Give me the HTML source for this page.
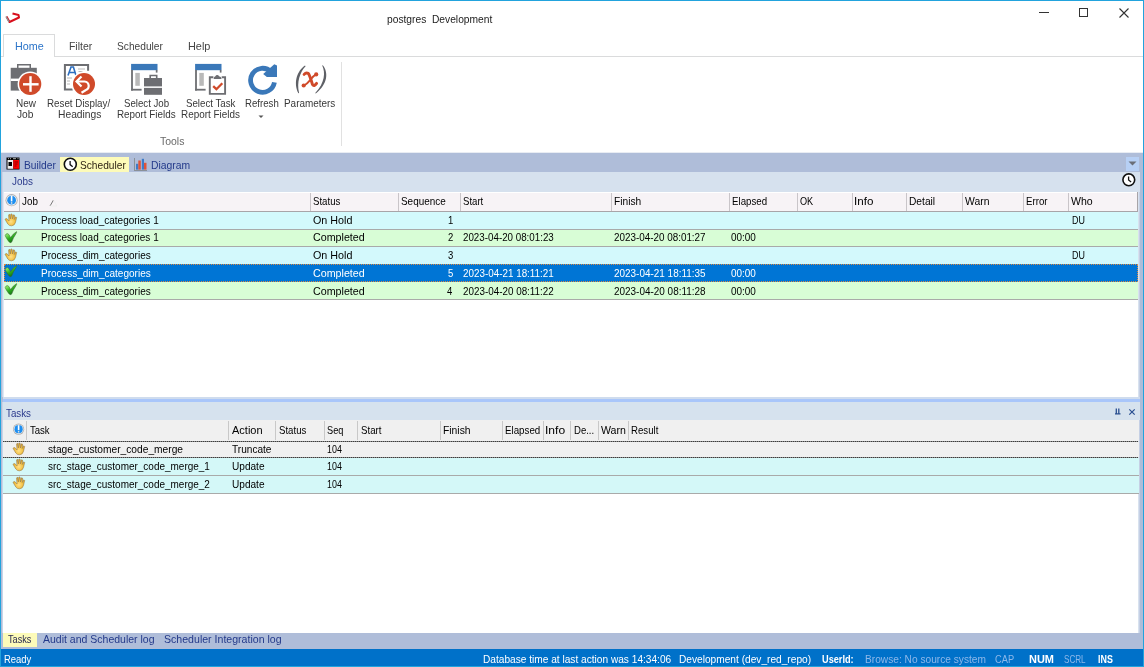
<!DOCTYPE html>
<html><head><meta charset="utf-8">
<style>
*{box-sizing:border-box;margin:0;padding:0}
html,body{width:1144px;height:667px;overflow:hidden;background:#fff}
body{position:relative;font-family:"Liberation Sans",sans-serif;font-size:10px;color:#1e1e1e}
.a{position:absolute}
.t{position:absolute;white-space:pre;transform-origin:0 0}
svg{position:absolute;overflow:visible}
#w{position:absolute;left:0;top:0;width:1144px;height:667px;overflow:hidden;filter:blur(0.3px)}
</style></head><body><div id="w">
<svg style="left:0px;top:0px" width="24" height="30" viewBox="0 0 24 30"><path d="M6.5 16.5 L9.5 22 L19 17.5 L18.5 15 L12.5 13.5" fill="none" stroke="#d80f1c" stroke-width="2" stroke-linejoin="round"/><path d="M6 16.5 L9 22" stroke="#8a9a9a" stroke-width="1.3"/></svg>
<div class="t" style="left:387.00px;top:14.17px;font-size:11.5px;line-height:11.5px;color:#222;transform:scaleX(0.8903);">postgres  Development</div>
<div class="a" style="left:1039px;top:11.6px;width:10px;height:1px;background:#333;"></div>
<div class="a" style="left:1079px;top:8px;width:9px;height:9px;background:transparent;border:1px solid #333"></div>
<svg style="left:1119px;top:8px" width="10" height="10" viewBox="0 0 10 10"><path d="M0.5 0.5 L9.5 9.5 M9.5 0.5 L0.5 9.5" stroke="#333" stroke-width="1.1"/></svg>
<div class="a" style="left:1px;top:56px;width:1142px;height:1px;background:#dadbdc;"></div>
<div class="a" style="left:3px;top:34px;width:52px;height:23px;background:#fff;border:1px solid #dadbdc;border-bottom:none"></div>
<div class="t" style="left:14.70px;top:40.48px;font-size:11.6px;line-height:11.6px;color:#2b74c9;transform:scaleX(0.9285);">Home</div>
<div class="t" style="left:68.60px;top:40.48px;font-size:11.6px;line-height:11.6px;color:#444;transform:scaleX(0.8995);">Filter</div>
<div class="t" style="left:117.00px;top:40.48px;font-size:11.6px;line-height:11.6px;color:#444;transform:scaleX(0.8788);">Scheduler</div>
<div class="t" style="left:188.20px;top:40.48px;font-size:11.6px;line-height:11.6px;color:#444;transform:scaleX(0.9403);">Help</div>
<svg style="left:0px;top:56px" width="50" height="50" viewBox="0 0 50 50">
<path d="M17 8 h14 v4 h-1.5 v-2.4 h-11 v2.4 h-1.5z" fill="#6d6e72"/>
<rect x="10.7" y="11.8" width="26.1" height="22.8" fill="#6d6e72"/>
<rect x="10.7" y="22.6" width="12" height="2.4" fill="#fff"/>
<circle cx="30.2" cy="28" r="12.6" fill="#fff"/>
<circle cx="30.2" cy="28" r="11.1" fill="#d04a2a"/>
<rect x="23" y="27.1" width="15.6" height="2.4" fill="#fff"/>
<rect x="29.3" y="20.2" width="2.4" height="15.6" fill="#fff"/></svg>
<svg style="left:50px;top:56px" width="50" height="50" viewBox="0 0 50 50">
<path d="M13.9 8 h25.2 v6.8 h-2 v-4.8 h-21.2 v22.6 h6.8 v2 h-8.8z" fill="#6d6e72"/>
<path d="M18 19.6 L21 11 L23.4 11 L26 19.6 M19.3 16.5 h5.5" fill="none" stroke="#2e6fc0" stroke-width="1.6"/>
<path d="M28 13 h7 M28.5 15.5 h4 M17 22 h5 M17 25 h3 M17 28 h3" stroke="#b8b8b8" stroke-width="1"/>
<circle cx="34" cy="28" r="12.5" fill="#fff"/>
<circle cx="34" cy="28" r="11" fill="#d04a2a"/>
<path d="M27 25.5 h7.5 a4.5 4.5 0 0 1 1 8.8 l-4 2.4" fill="none" stroke="#fff" stroke-width="2.2"/>
<path d="M31.5 20.5 L26.5 25.5 L31.5 30.5" fill="none" stroke="#fff" stroke-width="2.2"/></svg>
<svg style="left:130px;top:56px" width="40" height="40" viewBox="0 0 40 40"><rect x="1.1" y="7.9" width="26.4" height="6.3" fill="#3a78b9"/>
<rect x="1.1" y="14" width="1.8" height="20.6" fill="#6d6e72"/>
<rect x="1.1" y="32.8" width="10.5" height="1.8" fill="#6d6e72"/>
<rect x="25.8" y="14" width="1.7" height="2.6" fill="#6d6e72"/>
<rect x="5.3" y="16.9" width="4.5" height="12.9" fill="#b9b9b9"/>
<path d="M19.4 22.3 v-3.6 h8.1 v3.6 h-1.6 v-2.1 h-4.9 v2.1z" fill="#6d6e72"/>
<rect x="14" y="22" width="18" height="8.4" fill="#6d6e72"/>
<rect x="14" y="31.9" width="18" height="6.9" fill="#6d6e72"/></svg>
<svg style="left:194px;top:56px" width="40" height="40" viewBox="0 0 40 40"><rect x="1.1" y="7.9" width="26.4" height="6.3" fill="#3a78b9"/>
<rect x="1.1" y="14" width="1.8" height="20.6" fill="#6d6e72"/>
<rect x="1.1" y="32.8" width="10.5" height="1.8" fill="#6d6e72"/>
<rect x="25.8" y="14" width="1.7" height="2.6" fill="#6d6e72"/>
<rect x="5.3" y="16.9" width="4.5" height="12.9" fill="#b9b9b9"/>
<path d="M19.4 21.2 h-3.6 v16.7 h15.3 v-16.7 h-3.4" fill="none" stroke="#6d6e72" stroke-width="1.9"/>
<path d="M19.6 22.9 h8 l-0.8 -2 l-1.8 -0.6 a1.9 1.9 0 0 0 -3.6 0 l-1.2 0.6z" fill="#6d6e72"/>
<path d="M19.2 30.2 L22.4 33.2 L28.3 27.2" fill="none" stroke="#d04a2a" stroke-width="2.3"/></svg>
<svg style="left:240px;top:56px" width="45" height="45" viewBox="0 0 45 45">
<path d="M34.42 26.38 A12 12 0 1 1 31.1 15.8" fill="none" stroke="#3a78b9" stroke-width="4.8"/>
<path d="M34.3 8.2 L37 9.5 L37 21.1 L26.8 21.1 L23.2 18.1z" fill="#3a78b9"/></svg>
<svg style="left:285px;top:56px" width="45" height="45" viewBox="0 0 45 45">
<path d="M20 9.5 C12.5 14.5 8 26 13.4 37.3 L14.1 37 C11.5 26 15 16 20.6 10.2z" fill="#5e6066"/>
<path d="M37.8 9.2 C43.5 16 43 28 30.8 37.4 L30.2 37 C40 27 40.5 16 37.2 9.5z" fill="#5e6066"/>
<path d="M19.1 18.4 Q21 16.3 23.2 17.4 Q24.6 18.8 27.5 28.6 Q29 31 31.6 27.4" fill="none" stroke="#d04a2a" stroke-width="2.9" stroke-linecap="round"/>
<path d="M31.4 18.1 Q28 20 25.4 23.8 Q22 28 18.5 29.8" fill="none" stroke="#d04a2a" stroke-width="1.9" stroke-linecap="round"/>
<circle cx="31.2" cy="18.4" r="2.1" fill="#d04a2a"/><circle cx="18.7" cy="29.5" r="2.1" fill="#d04a2a"/></svg>
<div class="t" style="left:15.50px;top:97.28px;font-size:11.6px;line-height:11.6px;color:#383838;transform:scaleX(0.8606);">New</div>
<div class="t" style="left:17.30px;top:108.28px;font-size:11.6px;line-height:11.6px;color:#383838;transform:scaleX(0.8770);">Job</div>
<div class="t" style="left:47.00px;top:97.28px;font-size:11.6px;line-height:11.6px;color:#383838;transform:scaleX(0.8448);">Reset Display/</div>
<div class="t" style="left:57.70px;top:108.28px;font-size:11.6px;line-height:11.6px;color:#383838;transform:scaleX(0.8864);">Headings</div>
<div class="t" style="left:123.60px;top:97.28px;font-size:11.6px;line-height:11.6px;color:#383838;transform:scaleX(0.8326);">Select Job</div>
<div class="t" style="left:116.80px;top:108.28px;font-size:11.6px;line-height:11.6px;color:#383838;transform:scaleX(0.8503);">Report Fields</div>
<div class="t" style="left:185.80px;top:97.28px;font-size:11.6px;line-height:11.6px;color:#383838;transform:scaleX(0.8372);">Select Task</div>
<div class="t" style="left:181.00px;top:108.28px;font-size:11.6px;line-height:11.6px;color:#383838;transform:scaleX(0.8532);">Report Fields</div>
<div class="t" style="left:245.00px;top:97.28px;font-size:11.6px;line-height:11.6px;color:#383838;transform:scaleX(0.8319);">Refresh</div>
<div class="t" style="left:283.70px;top:97.28px;font-size:11.6px;line-height:11.6px;color:#383838;transform:scaleX(0.8565);">Parameters</div>
<svg style="left:258px;top:115px" width="6" height="4" viewBox="0 0 6 4"><path d="M0.5 0.5 L3 3 L5.5 0.5z" fill="#555"/></svg>
<div class="a" style="left:341px;top:62px;width:1px;height:84px;background:#e1e1e1;"></div>
<div class="t" style="left:160.20px;top:135.48px;font-size:11.6px;line-height:11.6px;color:#6a6a6a;transform:scaleX(0.9022);">Tools</div>
<div class="a" style="left:1px;top:153px;width:1142px;height:496px;background:#afbdd9;"></div>
<div class="a" style="left:1px;top:152px;width:1142px;height:1px;background:#e8ecf3;"></div>
<div class="a" style="left:1px;top:153px;width:1px;height:496px;background:#b4bcd6;"></div>
<svg style="left:6px;top:157px" width="14" height="13" viewBox="0 0 14 13"><rect x="0.5" y="0.5" width="13" height="12" fill="#000"/><rect x="1.5" y="3" width="5.8" height="8.8" fill="#eee"/><rect x="7.3" y="3" width="5.7" height="8.8" fill="#f00"/><rect x="2.5" y="5" width="3.5" height="4" fill="#000"/><path d="M8.5 5 h3.5 M8.5 7 h3 M8.5 9 h2" stroke="#800" stroke-width="1"/><path d="M2 1.7 h1 M4 1.7 h1 M7 1.7 h3 M11.5 1.7 h1" stroke="#ddd" stroke-width="0.8"/></svg>
<div class="t" style="left:23.60px;top:158.58px;font-size:11.6px;line-height:11.6px;color:#23398a;transform:scaleX(0.8805);">Builder</div>
<div class="a" style="left:60px;top:157px;width:69px;height:15px;background:#fdfbb9;"></div>
<svg style="left:62px;top:157px" width="16" height="16" viewBox="0 0 16 16"><circle cx="8.3" cy="7.3" r="6" fill="#fff" stroke="#111" stroke-width="1.6"/><path d="M8.1 4 v3.6 l2.6 2.1" fill="none" stroke="#111" stroke-width="1.3"/></svg>
<div class="t" style="left:80.10px;top:158.58px;font-size:11.6px;line-height:11.6px;color:#2a1f10;transform:scaleX(0.8769);">Scheduler</div>
<svg style="left:134px;top:158px" width="14" height="14" viewBox="0 0 14 14"><rect x="0" y="0" width="1" height="12.5" fill="#8a9098"/><rect x="0" y="12" width="13" height="1" fill="#8a9098"/><rect x="2" y="5.8" width="2.3" height="5.8" fill="#3d7cc9"/><rect x="4.3" y="2.5" width="2.5" height="9.1" fill="#e0543a"/><rect x="7.8" y="0.8" width="2.2" height="10.8" fill="#3d7cc9"/><rect x="10" y="4.8" width="2.5" height="6.8" fill="#e0543a"/></svg>
<div class="t" style="left:151.00px;top:158.58px;font-size:11.6px;line-height:11.6px;color:#23398a;transform:scaleX(0.8922);">Diagram</div>
<div class="a" style="left:1126px;top:157px;width:13px;height:14px;background:#b7d0f5;"></div>
<svg style="left:1128px;top:161px" width="9" height="5" viewBox="0 0 9 5"><path d="M0.5 0.5 h8 l-4 4z" fill="#6a6e78"/></svg>
<div class="a" style="left:2px;top:172px;width:1px;height:225px;background:#c8d4e8;"></div>
<div class="a" style="left:3px;top:172px;width:1135px;height:225px;background:#fff;"></div>
<div class="a" style="left:3px;top:192px;width:1px;height:205px;background:#e0e8f4;"></div>
<div class="a" style="left:1138px;top:192px;width:1px;height:205px;background:#d8e2ef;"></div>
<div class="a" style="left:1139px;top:192px;width:1px;height:205px;background:#c5d0e5;"></div>
<div class="a" style="left:3px;top:172px;width:1137px;height:20px;background:#d6e1ee;"></div>
<div class="t" style="left:11.90px;top:175.53px;font-size:10.6px;line-height:10.6px;color:#2a3a8c;transform:scaleX(0.9330);">Jobs</div>
<svg style="left:1121px;top:173px" width="16" height="16" viewBox="0 0 16 16"><circle cx="7.8" cy="6.8" r="5.9" fill="#fff" stroke="#111" stroke-width="1.6"/><path d="M7.6 3.4 v3.6 l2.5 2.1" fill="none" stroke="#111" stroke-width="1.3"/></svg>
<div class="a" style="left:4px;top:192px;width:1134px;height:19px;background:#f7f3f6;"></div>
<div class="a" style="left:4px;top:192px;width:1134px;height:1px;background:#ffffff;"></div>
<div class="a" style="left:4px;top:211px;width:1134px;height:1px;background:#a8a4a8;"></div>
<div class="a" style="left:1137px;top:192px;width:1px;height:20px;background:#a8a4a8;"></div>
<svg style="left:4px;top:193px" width="16" height="16" viewBox="0 0 16 16"><circle cx="7.6" cy="7.2" r="6.1" fill="#b0b0b0"/><circle cx="7.6" cy="7.2" r="5.2" fill="#f4f4f4"/><circle cx="7.6" cy="7.2" r="4.4" fill="#1e8ef0"/><rect x="6.8" y="3" width="1.6" height="5.4" fill="#fff"/><rect x="6.9" y="9.2" width="1.4" height="1.6" fill="#e0e0e0"/></svg>
<div class="a" style="left:19px;top:193px;width:1px;height:18px;background:#c9c5c9;"></div>
<div class="a" style="left:310px;top:193px;width:1px;height:18px;background:#c9c5c9;"></div>
<div class="a" style="left:398px;top:193px;width:1px;height:18px;background:#c9c5c9;"></div>
<div class="a" style="left:460px;top:193px;width:1px;height:18px;background:#c9c5c9;"></div>
<div class="a" style="left:611px;top:193px;width:1px;height:18px;background:#c9c5c9;"></div>
<div class="a" style="left:729px;top:193px;width:1px;height:18px;background:#c9c5c9;"></div>
<div class="a" style="left:797px;top:193px;width:1px;height:18px;background:#c9c5c9;"></div>
<div class="a" style="left:852px;top:193px;width:1px;height:18px;background:#c9c5c9;"></div>
<div class="a" style="left:906px;top:193px;width:1px;height:18px;background:#c9c5c9;"></div>
<div class="a" style="left:962px;top:193px;width:1px;height:18px;background:#c9c5c9;"></div>
<div class="a" style="left:1023px;top:193px;width:1px;height:18px;background:#c9c5c9;"></div>
<div class="a" style="left:1068px;top:193px;width:1px;height:18px;background:#c9c5c9;"></div>
<div class="t" style="left:22.00px;top:195.38px;font-size:11.6px;line-height:11.6px;color:#000;transform:scaleX(0.8496);">Job</div>
<div class="t" style="left:312.60px;top:195.38px;font-size:11.6px;line-height:11.6px;color:#000;transform:scaleX(0.8315);">Status</div>
<div class="t" style="left:400.70px;top:195.38px;font-size:11.6px;line-height:11.6px;color:#000;transform:scaleX(0.8557);">Sequence</div>
<div class="t" style="left:463.00px;top:195.38px;font-size:11.6px;line-height:11.6px;color:#000;transform:scaleX(0.8273);">Start</div>
<div class="t" style="left:614.00px;top:195.38px;font-size:11.6px;line-height:11.6px;color:#000;transform:scaleX(0.8793);">Finish</div>
<div class="t" style="left:731.50px;top:195.38px;font-size:11.6px;line-height:11.6px;color:#000;transform:scaleX(0.8372);">Elapsed</div>
<div class="t" style="left:800.40px;top:195.38px;font-size:11.6px;line-height:11.6px;color:#000;transform:scaleX(0.7874);">OK</div>
<div class="t" style="left:853.60px;top:195.38px;font-size:11.6px;line-height:11.6px;color:#000;transform:scaleX(1.0006);">Info</div>
<div class="t" style="left:909.40px;top:195.38px;font-size:11.6px;line-height:11.6px;color:#000;transform:scaleX(0.8808);">Detail</div>
<div class="t" style="left:964.80px;top:195.38px;font-size:11.6px;line-height:11.6px;color:#000;transform:scaleX(0.8948);">Warn</div>
<div class="t" style="left:1025.50px;top:195.38px;font-size:11.6px;line-height:11.6px;color:#000;transform:scaleX(0.8339);">Error</div>
<div class="t" style="left:1071.00px;top:195.38px;font-size:11.6px;line-height:11.6px;color:#000;transform:scaleX(0.9106);">Who</div>
<svg style="left:49px;top:199px" width="9" height="8" viewBox="0 0 9 8"><path d="M1 7 L4.5 1" stroke="#777" stroke-width="1"/><path d="M4.5 1 L8 7 H1" fill="none" stroke="#eee" stroke-width="0.8"/></svg>
<svg style="left:0px;top:0px" width="1" height="1" viewBox="0 0 1 1"><defs><radialGradient id="hg" cx="0.5" cy="0.65" r="0.6"><stop offset="0" stop-color="#ffe08a"/><stop offset="0.6" stop-color="#f2c040"/><stop offset="1" stop-color="#d8a020"/></radialGradient></defs></svg>
<div class="a" style="left:4px;top:212px;width:1134px;height:17px;background:#d3f9fc;"></div>
<div class="a" style="left:4px;top:229px;width:1134px;height:1px;background:#a9aaa9;"></div>
<svg style="left:3px;top:212px" width="16" height="16" viewBox="0 0 16 16"><path d="M2.5 6.8 Q3.5 6 4.8 7.5 L6 9 L5.6 3 Q6 2 6.8 2.5 L7.4 7 L7.8 2.2 Q8.6 1.6 9.2 2.4 L9.4 7 L10.2 3 Q11 2.4 11.6 3.2 L11.2 7.5 L12.4 5 Q13.2 4.6 13.6 5.4 L12.6 10 Q11.8 13.6 8.6 13.8 Q6.2 14 4.8 12 L2.3 7.8 Q2 7 2.5 6.8z" fill="url(#hg)" stroke="#9a7a48" stroke-width="0.6"/></svg>
<div class="t" style="left:41.40px;top:214.08px;font-size:11.6px;line-height:11.6px;color:#000;transform:scaleX(0.8614);">Process load_categories 1</div>
<div class="t" style="left:312.60px;top:214.08px;font-size:11.6px;line-height:11.6px;color:#000;transform:scaleX(0.9267);">On Hold</div>
<div class="t" style="left:447.98px;top:214.08px;font-size:11.6px;line-height:11.6px;color:#000;transform:scaleX(0.8200);">1</div>
<div class="t" style="left:1071.80px;top:214.08px;font-size:11.6px;line-height:11.6px;color:#000;transform:scaleX(0.7696);">DU</div>
<div class="a" style="left:4px;top:230px;width:1134px;height:16px;background:#d8fdd6;"></div>
<div class="a" style="left:4px;top:246px;width:1134px;height:1px;background:#a9aaa9;"></div>
<svg style="left:3px;top:230px" width="16" height="16" viewBox="0 0 16 16"><defs><linearGradient id="cg" x1="0.1" y1="0.2" x2="0.6" y2="1"><stop offset="0" stop-color="#98f870"/><stop offset="0.5" stop-color="#30b020"/><stop offset="1" stop-color="#107010"/></linearGradient></defs><path d="M2.2 6.5 Q2.6 4.2 4.6 4.4 Q6 4.8 7 7.2 L7.6 8.4 Q10 4.5 13.6 2.4 Q13.9 3.2 13 4.5 Q10.5 8 8.8 12.6 Q8.2 13.8 7 13.4 Q5.8 12.8 4.8 11 Q3 8.5 2.2 6.5z" transform="translate(0,-0.8)" fill="url(#cg)" stroke="#3a5a3a" stroke-width="0.5"/></svg>
<div class="t" style="left:41.40px;top:231.48px;font-size:11.6px;line-height:11.6px;color:#000;transform:scaleX(0.8614);">Process load_categories 1</div>
<div class="t" style="left:312.60px;top:231.48px;font-size:11.6px;line-height:11.6px;color:#000;transform:scaleX(0.9224);">Completed</div>
<div class="t" style="left:447.98px;top:231.48px;font-size:11.6px;line-height:11.6px;color:#000;transform:scaleX(0.8200);">2</div>
<div class="t" style="left:462.90px;top:231.48px;font-size:11.6px;line-height:11.6px;color:#000;transform:scaleX(0.8432);">2023-04-20 08:01:23</div>
<div class="t" style="left:614.00px;top:231.48px;font-size:11.6px;line-height:11.6px;color:#000;transform:scaleX(0.8507);">2023-04-20 08:01:27</div>
<div class="t" style="left:731.00px;top:231.48px;font-size:11.6px;line-height:11.6px;color:#000;transform:scaleX(0.8577);">00:00</div>
<div class="a" style="left:4px;top:247px;width:1134px;height:17px;background:#d3f9fc;"></div>
<div class="a" style="left:4px;top:264px;width:1134px;height:1px;background:#a9aaa9;"></div>
<svg style="left:3px;top:247px" width="16" height="16" viewBox="0 0 16 16"><path d="M2.5 6.8 Q3.5 6 4.8 7.5 L6 9 L5.6 3 Q6 2 6.8 2.5 L7.4 7 L7.8 2.2 Q8.6 1.6 9.2 2.4 L9.4 7 L10.2 3 Q11 2.4 11.6 3.2 L11.2 7.5 L12.4 5 Q13.2 4.6 13.6 5.4 L12.6 10 Q11.8 13.6 8.6 13.8 Q6.2 14 4.8 12 L2.3 7.8 Q2 7 2.5 6.8z" fill="url(#hg)" stroke="#9a7a48" stroke-width="0.6"/></svg>
<div class="t" style="left:41.40px;top:248.88px;font-size:11.6px;line-height:11.6px;color:#000;transform:scaleX(0.8643);">Process_dim_categories</div>
<div class="t" style="left:312.60px;top:248.88px;font-size:11.6px;line-height:11.6px;color:#000;transform:scaleX(0.9267);">On Hold</div>
<div class="t" style="left:447.98px;top:248.88px;font-size:11.6px;line-height:11.6px;color:#000;transform:scaleX(0.8200);">3</div>
<div class="t" style="left:1071.80px;top:248.88px;font-size:11.6px;line-height:11.6px;color:#000;transform:scaleX(0.7696);">DU</div>
<div class="a" style="left:4px;top:264px;width:1134px;height:18px;background:#0075d5;"></div>
<svg style="left:3px;top:264px" width="16" height="16" viewBox="0 0 16 16"><defs><linearGradient id="cg" x1="0.1" y1="0.2" x2="0.6" y2="1"><stop offset="0" stop-color="#98f870"/><stop offset="0.5" stop-color="#30b020"/><stop offset="1" stop-color="#107010"/></linearGradient></defs><path d="M2.2 6.5 Q2.6 4.2 4.6 4.4 Q6 4.8 7 7.2 L7.6 8.4 Q10 4.5 13.6 2.4 Q13.9 3.2 13 4.5 Q10.5 8 8.8 12.6 Q8.2 13.8 7 13.4 Q5.8 12.8 4.8 11 Q3 8.5 2.2 6.5z" transform="translate(0,-0.8)" fill="url(#cg)" stroke="#3a5a3a" stroke-width="0.5"/></svg>
<div class="t" style="left:41.40px;top:267.08px;font-size:11.6px;line-height:11.6px;color:#fff;transform:scaleX(0.8643);">Process_dim_categories</div>
<div class="t" style="left:312.60px;top:267.08px;font-size:11.6px;line-height:11.6px;color:#fff;transform:scaleX(0.9224);">Completed</div>
<div class="t" style="left:447.98px;top:267.08px;font-size:11.6px;line-height:11.6px;color:#fff;transform:scaleX(0.8200);">5</div>
<div class="t" style="left:462.90px;top:267.08px;font-size:11.6px;line-height:11.6px;color:#fff;transform:scaleX(0.8501);">2023-04-21 18:11:21</div>
<div class="t" style="left:614.00px;top:267.08px;font-size:11.6px;line-height:11.6px;color:#fff;transform:scaleX(0.8576);">2023-04-21 18:11:35</div>
<div class="t" style="left:731.00px;top:267.08px;font-size:11.6px;line-height:11.6px;color:#fff;transform:scaleX(0.8577);">00:00</div>
<div class="a" style="left:4px;top:282px;width:1134px;height:17px;background:#d8fdd6;"></div>
<div class="a" style="left:4px;top:299px;width:1134px;height:1px;background:#a9aaa9;"></div>
<svg style="left:3px;top:282px" width="16" height="16" viewBox="0 0 16 16"><defs><linearGradient id="cg" x1="0.1" y1="0.2" x2="0.6" y2="1"><stop offset="0" stop-color="#98f870"/><stop offset="0.5" stop-color="#30b020"/><stop offset="1" stop-color="#107010"/></linearGradient></defs><path d="M2.2 6.5 Q2.6 4.2 4.6 4.4 Q6 4.8 7 7.2 L7.6 8.4 Q10 4.5 13.6 2.4 Q13.9 3.2 13 4.5 Q10.5 8 8.8 12.6 Q8.2 13.8 7 13.4 Q5.8 12.8 4.8 11 Q3 8.5 2.2 6.5z" transform="translate(0,-0.8)" fill="url(#cg)" stroke="#3a5a3a" stroke-width="0.5"/></svg>
<div class="t" style="left:41.40px;top:284.58px;font-size:11.6px;line-height:11.6px;color:#000;transform:scaleX(0.8643);">Process_dim_categories</div>
<div class="t" style="left:312.60px;top:284.58px;font-size:11.6px;line-height:11.6px;color:#000;transform:scaleX(0.9224);">Completed</div>
<div class="t" style="left:447.16px;top:284.58px;font-size:11.6px;line-height:11.6px;color:#000;transform:scaleX(0.8200);">4</div>
<div class="t" style="left:462.90px;top:284.58px;font-size:11.6px;line-height:11.6px;color:#000;transform:scaleX(0.8501);">2023-04-20 08:11:22</div>
<div class="t" style="left:614.00px;top:284.58px;font-size:11.6px;line-height:11.6px;color:#000;transform:scaleX(0.8576);">2023-04-20 08:11:28</div>
<div class="t" style="left:731.00px;top:284.58px;font-size:11.6px;line-height:11.6px;color:#000;transform:scaleX(0.8577);">00:00</div>
<div class="a" style="left:4px;top:264px;width:1134px;height:18px;background:transparent;border:1px dotted #e08a40"></div>
<div class="a" style="left:3px;top:397px;width:1137px;height:2px;background:#cfdcee;"></div>
<div class="a" style="left:3px;top:399px;width:1137px;height:3px;background:#a9c6fa;"></div>
<div class="a" style="left:2px;top:402px;width:1px;height:231px;background:#c8d4e8;"></div>
<div class="a" style="left:3px;top:402px;width:1137px;height:18px;background:#d6e2ee;"></div>
<div class="t" style="left:6.30px;top:408.03px;font-size:10.6px;line-height:10.6px;color:#2a3a8c;transform:scaleX(0.9223);">Tasks</div>
<svg style="left:1115px;top:408px" width="7" height="8" viewBox="0 0 7 8"><path d="M1.3 0.5 v5 M3.8 0.5 v5 M0 5.8 h5.5" stroke="#2a4f90" stroke-width="1.3"/></svg>
<svg style="left:1129px;top:409px" width="6" height="6" viewBox="0 0 6 6"><path d="M0.3 0.3 L5.7 5.7 M5.7 0.3 L0.3 5.7" stroke="#2a4f90" stroke-width="1.2"/></svg>
<div class="a" style="left:3px;top:420px;width:1135px;height:213px;background:#fff;"></div>
<div class="a" style="left:1138px;top:420px;width:1px;height:213px;background:#d8e2ef;"></div>
<div class="a" style="left:1139px;top:420px;width:1px;height:213px;background:#c5d0e5;"></div>
<div class="a" style="left:3px;top:420px;width:1136px;height:21px;background:#f0f0f0;"></div>
<div class="a" style="left:26px;top:421px;width:1px;height:19px;background:#c8c8c8;"></div>
<div class="a" style="left:228px;top:421px;width:1px;height:19px;background:#c8c8c8;"></div>
<div class="a" style="left:275px;top:421px;width:1px;height:19px;background:#c8c8c8;"></div>
<div class="a" style="left:324px;top:421px;width:1px;height:19px;background:#c8c8c8;"></div>
<div class="a" style="left:357px;top:421px;width:1px;height:19px;background:#c8c8c8;"></div>
<div class="a" style="left:440px;top:421px;width:1px;height:19px;background:#c8c8c8;"></div>
<div class="a" style="left:502px;top:421px;width:1px;height:19px;background:#c8c8c8;"></div>
<div class="a" style="left:543px;top:421px;width:1px;height:19px;background:#c8c8c8;"></div>
<div class="a" style="left:570px;top:421px;width:1px;height:19px;background:#c8c8c8;"></div>
<div class="a" style="left:598px;top:421px;width:1px;height:19px;background:#c8c8c8;"></div>
<div class="a" style="left:628px;top:421px;width:1px;height:19px;background:#c8c8c8;"></div>
<svg style="left:11.3px;top:421.6px" width="16" height="16" viewBox="0 0 16 16"><circle cx="7.6" cy="7.2" r="5.6" fill="#b0b0b0"/><circle cx="7.6" cy="7.2" r="4.8" fill="#f4f4f4"/><circle cx="7.6" cy="7.2" r="4.1" fill="#1e8ef0"/><rect x="6.8" y="3.2" width="1.6" height="5" fill="#fff"/><rect x="6.9" y="9" width="1.4" height="1.5" fill="#e0e0e0"/></svg>
<div class="t" style="left:30.10px;top:424.08px;font-size:11.6px;line-height:11.6px;color:#000;transform:scaleX(0.8236);">Task</div>
<div class="t" style="left:231.70px;top:424.08px;font-size:11.6px;line-height:11.6px;color:#000;transform:scaleX(0.9504);">Action</div>
<div class="t" style="left:279.20px;top:424.08px;font-size:11.6px;line-height:11.6px;color:#000;transform:scaleX(0.8315);">Status</div>
<div class="t" style="left:327.30px;top:424.08px;font-size:11.6px;line-height:11.6px;color:#000;transform:scaleX(0.7928);">Seq</div>
<div class="t" style="left:360.60px;top:424.08px;font-size:11.6px;line-height:11.6px;color:#000;transform:scaleX(0.8352);">Start</div>
<div class="t" style="left:443.00px;top:424.08px;font-size:11.6px;line-height:11.6px;color:#000;transform:scaleX(0.8924);">Finish</div>
<div class="t" style="left:505.20px;top:424.08px;font-size:11.6px;line-height:11.6px;color:#000;transform:scaleX(0.8420);">Elapsed</div>
<div class="t" style="left:544.96px;top:424.08px;font-size:11.6px;line-height:11.6px;color:#000;transform:scaleX(1.0397);">Info</div>
<div class="t" style="left:574.00px;top:424.08px;font-size:11.6px;line-height:11.6px;color:#000;transform:scaleX(0.8243);">De...</div>
<div class="t" style="left:601.00px;top:424.08px;font-size:11.6px;line-height:11.6px;color:#000;transform:scaleX(0.9135);">Warn</div>
<div class="t" style="left:631.00px;top:424.08px;font-size:11.6px;line-height:11.6px;color:#000;transform:scaleX(0.8323);">Result</div>
<div class="a" style="left:3px;top:442px;width:1136px;height:15px;background:#f0f0f0;"></div>
<svg style="left:10.7px;top:440.9px" width="16" height="16" viewBox="0 0 16 16"><path d="M2.5 6.8 Q3.5 6 4.8 7.5 L6 9 L5.6 3 Q6 2 6.8 2.5 L7.4 7 L7.8 2.2 Q8.6 1.6 9.2 2.4 L9.4 7 L10.2 3 Q11 2.4 11.6 3.2 L11.2 7.5 L12.4 5 Q13.2 4.6 13.6 5.4 L12.6 10 Q11.8 13.6 8.6 13.8 Q6.2 14 4.8 12 L2.3 7.8 Q2 7 2.5 6.8z" fill="url(#hg)" stroke="#9a7a48" stroke-width="0.6"/></svg>
<div class="t" style="left:48.30px;top:442.98px;font-size:11.6px;line-height:11.6px;color:#000;transform:scaleX(0.8801);">stage_customer_code_merge</div>
<div class="t" style="left:231.70px;top:442.98px;font-size:11.6px;line-height:11.6px;color:#000;transform:scaleX(0.8713);">Truncate</div>
<div class="t" style="left:327.00px;top:442.98px;font-size:11.6px;line-height:11.6px;color:#000;transform:scaleX(0.7690);">104</div>
<div class="a" style="left:3px;top:458px;width:1136px;height:17px;background:#d4f8f8;"></div>
<svg style="left:10.7px;top:456.9px" width="16" height="16" viewBox="0 0 16 16"><path d="M2.5 6.8 Q3.5 6 4.8 7.5 L6 9 L5.6 3 Q6 2 6.8 2.5 L7.4 7 L7.8 2.2 Q8.6 1.6 9.2 2.4 L9.4 7 L10.2 3 Q11 2.4 11.6 3.2 L11.2 7.5 L12.4 5 Q13.2 4.6 13.6 5.4 L12.6 10 Q11.8 13.6 8.6 13.8 Q6.2 14 4.8 12 L2.3 7.8 Q2 7 2.5 6.8z" fill="url(#hg)" stroke="#9a7a48" stroke-width="0.6"/></svg>
<div class="t" style="left:48.30px;top:460.28px;font-size:11.6px;line-height:11.6px;color:#000;transform:scaleX(0.8603);">src_stage_customer_code_merge_1</div>
<div class="t" style="left:231.70px;top:460.28px;font-size:11.6px;line-height:11.6px;color:#000;transform:scaleX(0.8690);">Update</div>
<div class="t" style="left:327.00px;top:460.28px;font-size:11.6px;line-height:11.6px;color:#000;transform:scaleX(0.7690);">104</div>
<div class="a" style="left:3px;top:476px;width:1136px;height:17px;background:#d4f8f8;"></div>
<svg style="left:10.7px;top:474.9px" width="16" height="16" viewBox="0 0 16 16"><path d="M2.5 6.8 Q3.5 6 4.8 7.5 L6 9 L5.6 3 Q6 2 6.8 2.5 L7.4 7 L7.8 2.2 Q8.6 1.6 9.2 2.4 L9.4 7 L10.2 3 Q11 2.4 11.6 3.2 L11.2 7.5 L12.4 5 Q13.2 4.6 13.6 5.4 L12.6 10 Q11.8 13.6 8.6 13.8 Q6.2 14 4.8 12 L2.3 7.8 Q2 7 2.5 6.8z" fill="url(#hg)" stroke="#9a7a48" stroke-width="0.6"/></svg>
<div class="t" style="left:48.30px;top:477.58px;font-size:11.6px;line-height:11.6px;color:#000;transform:scaleX(0.8603);">src_stage_customer_code_merge_2</div>
<div class="t" style="left:231.70px;top:477.58px;font-size:11.6px;line-height:11.6px;color:#000;transform:scaleX(0.8690);">Update</div>
<div class="t" style="left:327.00px;top:477.58px;font-size:11.6px;line-height:11.6px;color:#000;transform:scaleX(0.7690);">104</div>
<div class="a" style="left:3px;top:475px;width:1136px;height:1px;background:#a9aaa9;"></div>
<div class="a" style="left:3px;top:493px;width:1136px;height:1px;background:#a9aaa9;"></div>
<div class="a" style="left:3px;top:441px;width:1135px;height:1px;background:repeating-linear-gradient(90deg,#3c3c3c 0 1px,#8a8a8a 1px 2px);"></div>
<div class="a" style="left:3px;top:457px;width:1135px;height:1px;background:repeating-linear-gradient(90deg,#3c3c3c 0 1px,#8a8a8a 1px 2px);"></div>
<div class="a" style="left:3px;top:633px;width:34px;height:14px;background:#fdfbb9;"></div>
<div class="t" style="left:7.80px;top:633.38px;font-size:11.6px;line-height:11.6px;color:#2a2a50;transform:scaleX(0.7909);">Tasks</div>
<div class="t" style="left:42.70px;top:633.38px;font-size:11.6px;line-height:11.6px;color:#23398a;transform:scaleX(0.9057);">Audit and Scheduler log</div>
<div class="t" style="left:164.30px;top:633.38px;font-size:11.6px;line-height:11.6px;color:#23398a;transform:scaleX(0.9124);">Scheduler Integration log</div>
<div class="a" style="left:1px;top:649px;width:1142px;height:18px;background:#0071c9;"></div>
<div class="t" style="left:3.50px;top:653.18px;font-size:11.6px;line-height:11.6px;color:#fff;transform:scaleX(0.8156);">Ready</div>
<div class="t" style="left:482.70px;top:653.18px;font-size:11.6px;line-height:11.6px;color:#fff;transform:scaleX(0.8743);">Database time at last action was 14:34:06</div>
<div class="t" style="left:679.40px;top:653.18px;font-size:11.6px;line-height:11.6px;color:#fff;transform:scaleX(0.8758);">Development (dev_red_repo)</div>
<div class="t" style="left:821.60px;top:653.18px;font-size:11.6px;line-height:11.6px;color:#fff;transform:scaleX(0.7932);font-weight:bold;">UserId:</div>
<div class="t" style="left:864.60px;top:653.18px;font-size:11.6px;line-height:11.6px;color:#8db8ea;transform:scaleX(0.8774);">Browse: No source system</div>
<div class="t" style="left:994.80px;top:653.18px;font-size:11.6px;line-height:11.6px;color:#8db8ea;transform:scaleX(0.8006);">CAP</div>
<div class="t" style="left:1029.10px;top:653.18px;font-size:11.6px;line-height:11.6px;color:#fff;transform:scaleX(0.9477);font-weight:bold;">NUM</div>
<div class="t" style="left:1063.70px;top:653.18px;font-size:11.6px;line-height:11.6px;color:#8db8ea;transform:scaleX(0.6989);">SCRL</div>
<div class="t" style="left:1097.70px;top:653.18px;font-size:11.6px;line-height:11.6px;color:#fff;transform:scaleX(0.7656);font-weight:bold;">INS</div>
<div class="a" style="left:0px;top:0px;width:1144px;height:1px;background:#22a3dd;"></div>
<div class="a" style="left:0px;top:0px;width:1px;height:667px;background:#22a3dd;"></div>
<div class="a" style="left:1143px;top:0px;width:1px;height:667px;background:#22a3dd;"></div>
<div class="a" style="left:0px;top:666px;width:1144px;height:1px;background:#22a3dd;"></div>
</div></body></html>
